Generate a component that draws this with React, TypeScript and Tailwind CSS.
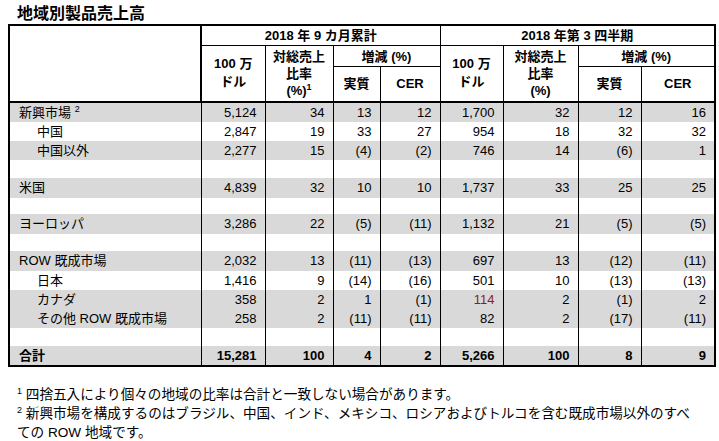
import React from "react";

// 地域別製品売上高テーブル
const FONT = "font-['Liberation_Sans','Noto_Sans_CJK_JP',sans-serif]";

type Row = {
  label?: string;
  sup?: string;
  indent?: boolean;
  values?: string[];
  gray?: boolean;
  bold?: boolean;
  h: string;
  red?: number; // 色付きセルの列番号
};

const ROWS: Row[] = [
  { label: "新興市場", sup: "2", values: ["5,124", "34", "13", "12", "1,700", "32", "12", "16"], gray: true, h: "h-[20px]" },
  { label: "中国", indent: true, values: ["2,847", "19", "33", "27", "954", "18", "32", "32"], h: "h-[19px]" },
  { label: "中国以外", indent: true, values: ["2,277", "15", "(4)", "(2)", "746", "14", "(6)", "1"], gray: true, h: "h-[19px]" },
  { h: "h-[18px]" },
  { label: "米国", values: ["4,839", "32", "10", "10", "1,737", "33", "25", "25"], gray: true, h: "h-[20px]" },
  { h: "h-[16px]" },
  { label: "ヨーロッパ", values: ["3,286", "22", "(5)", "(11)", "1,132", "21", "(5)", "(5)"], gray: true, h: "h-[20px]" },
  { h: "h-[17px]" },
  { label: "ROW 既成市場", values: ["2,032", "13", "(11)", "(13)", "697", "13", "(12)", "(11)"], gray: true, h: "h-[20px]" },
  { label: "日本", indent: true, values: ["1,416", "9", "(14)", "(16)", "501", "10", "(13)", "(13)"], h: "h-[19px]" },
  { label: "カナダ", indent: true, values: ["358", "2", "1", "(1)", "114", "2", "(1)", "2"], gray: true, h: "h-[19px]", red: 4 },
  { label: "その他 ROW 既成市場", indent: true, values: ["258", "2", "(11)", "(11)", "82", "2", "(17)", "(11)"], gray: true, h: "h-[18px]" },
  { h: "h-[18px]" },
  { label: "合計", values: ["15,281", "100", "4", "2", "5,266", "100", "8", "9"], gray: true, bold: true, h: "h-[19px]" },
];

// 行の高さを変えない上付き文字
function Sup({ children }: { children: React.ReactNode }) {
  return <span className="relative top-[-5px] text-[9px] leading-none">{children}</span>;
}

function HeaderRows() {
  const th = "border border-black p-0 font-bold text-center align-middle";
  return (
    <thead>
      <tr className="h-[20px]">
        <th rowSpan={3} className="border-2 border-black p-0" />
        <th colSpan={4} className={`${th} border-t-2`}>2018 年 9 カ月累計</th>
        <th colSpan={4} className={`${th} border-t-2 border-r-2`}>2018 年第 3 四半期</th>
      </tr>
      <tr className="h-[21px]">
        <th rowSpan={2} className={`${th} border-b-2 leading-[18px]`}>
          100 万<br />ドル
        </th>
        <th rowSpan={2} className={`${th} border-b-2 leading-[17px]`}>
          対総売上<br />比率<br />(%)<Sup>1</Sup>
        </th>
        <th colSpan={2} className={th}>増減 (%)</th>
        <th rowSpan={2} className={`${th} border-b-2 leading-[18px]`}>
          100 万<br />ドル
        </th>
        <th rowSpan={2} className={`${th} border-b-2 leading-[17px]`}>
          対総売上<br />比率<br />(%)
        </th>
        <th colSpan={2} className={`${th} border-r-2`}>増減 (%)</th>
      </tr>
      <tr className="h-[35px]">
        <th className={`${th} border-b-2`}>実質</th>
        <th className={`${th} border-b-2`}>CER</th>
        <th className={`${th} border-b-2`}>実質</th>
        <th className={`${th} border-b-2 border-r-2`}>CER</th>
      </tr>
    </thead>
  );
}

export default function App() {
  return (
    <div className={`w-[719px] h-[441px] bg-white text-black ${FONT}`}>
      <div className="pl-[17px] pt-[4px] h-[24px] text-[16px] font-bold leading-[20px]">地域別製品売上高</div>

      <table className="ml-[8px] w-[706px] table-fixed border-collapse text-[13px] leading-[19px]">
        <colgroup>
          <col className="w-[192px]" />
          <col className="w-[64px]" />
          <col className="w-[68px]" />
          <col className="w-[47px]" />
          <col className="w-[60px]" />
          <col className="w-[63px]" />
          <col className="w-[75px]" />
          <col className="w-[63px]" />
          <col className="w-[74px]" />
        </colgroup>
        <HeaderRows />
        <tbody>
          {ROWS.map((r, i) => {
            const last = i === ROWS.length - 1;
            const rowCls = `${r.h} ${r.gray ? "bg-[#d9d9d9]" : "bg-white"} ${r.bold ? "font-bold" : ""}`;
            const edge = last ? "border-b-2" : "";
            return (
              <tr key={i} className={rowCls}>
                <td
                  className={`border-l-2 border-r border-black p-0 whitespace-nowrap ${edge} ${
                    r.indent ? "pl-[27px]" : "pl-[9px]"
                  }`}
                >
                  {r.label}
                  {r.sup && (
                    <>
                      {" "}
                      <Sup>{r.sup}</Sup>
                    </>
                  )}
                </td>
                {Array.from({ length: 8 }).map((_, c) => (
                  <td
                    key={c}
                    className={`border-r border-black p-0 pr-[8px] text-right whitespace-nowrap ${edge} ${
                      c === 7 ? "border-r-2" : ""
                    } ${r.red === c ? "text-[#8a1f14]" : ""}`}
                  >
                    {r.values?.[c]}
                  </td>
                ))}
              </tr>
            );
          })}
        </tbody>
      </table>

      <div className="mt-[18px] pl-[17px] text-[13.6px] leading-[19px]">
        <p>
          <Sup>1</Sup> 四捨五入により個々の地域の比率は合計と一致しない場合があります。
        </p>
        <p>
          <Sup>2</Sup> 新興市場を構成するのはブラジル、中国、インド、メキシコ、ロシアおよびトルコを含む既成市場以外のすべ
          <br />
          ての ROW 地域です。
        </p>
      </div>
    </div>
  );
}
